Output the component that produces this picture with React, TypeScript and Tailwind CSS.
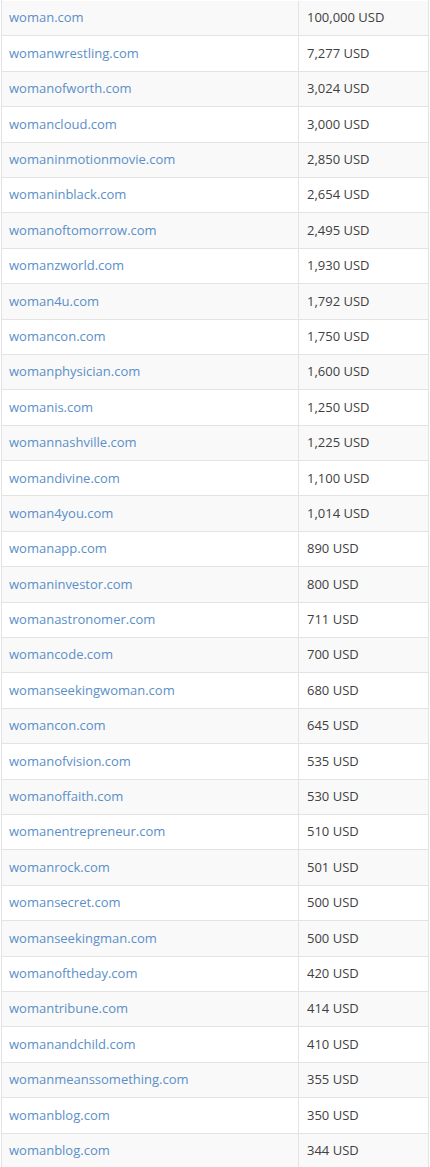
const rows: [string, string][] = [
  ["woman.com", "100,000 USD"],
  ["womanwrestling.com", "7,277 USD"],
  ["womanofworth.com", "3,024 USD"],
  ["womancloud.com", "3,000 USD"],
  ["womaninmotionmovie.com", "2,850 USD"],
  ["womaninblack.com", "2,654 USD"],
  ["womanoftomorrow.com", "2,495 USD"],
  ["womanzworld.com", "1,930 USD"],
  ["woman4u.com", "1,792 USD"],
  ["womancon.com", "1,750 USD"],
  ["womanphysician.com", "1,600 USD"],
  ["womanis.com", "1,250 USD"],
  ["womannashville.com", "1,225 USD"],
  ["womandivine.com", "1,100 USD"],
  ["woman4you.com", "1,014 USD"],
  ["womanapp.com", "890 USD"],
  ["womaninvestor.com", "800 USD"],
  ["womanastronomer.com", "711 USD"],
  ["womancode.com", "700 USD"],
  ["womanseekingwoman.com", "680 USD"],
  ["womancon.com", "645 USD"],
  ["womanofvision.com", "535 USD"],
  ["womanoffaith.com", "530 USD"],
  ["womanentrepreneur.com", "510 USD"],
  ["womanrock.com", "501 USD"],
  ["womansecret.com", "500 USD"],
  ["womanseekingman.com", "500 USD"],
  ["womanoftheday.com", "420 USD"],
  ["womantribune.com", "414 USD"],
  ["womanandchild.com", "410 USD"],
  ["womanmeanssomething.com", "355 USD"],
  ["womanblog.com", "350 USD"],
  ["womanblog.com", "344 USD"],
];

export default function App() {
  return (
    <main className="min-h-screen bg-white font-['Open_Sans',sans-serif] text-[13px]">
      {/* tabla de ventas */}
      <div className="ml-px w-[428px] border-x border-[#e3e3e3] pt-px">
        {rows.map(([domain, price], i) => (
          <div
            key={i}
            className={`flex h-[35.4px] items-center border-b border-[#e3e3e3] ${
              i % 2 === 0 ? "bg-[#f9f9f9]" : "bg-white"
            }`}
          >
            <div className="flex h-full w-[297px] items-center border-r border-[#e3e3e3] pl-[7px]">
              <a href="#" className="text-[#5b8fc8]">
                {domain}
              </a>
            </div>
            <div className="pl-[8px] text-[#3f3f3f]">{price}</div>
          </div>
        ))}
      </div>
    </main>
  );
}
